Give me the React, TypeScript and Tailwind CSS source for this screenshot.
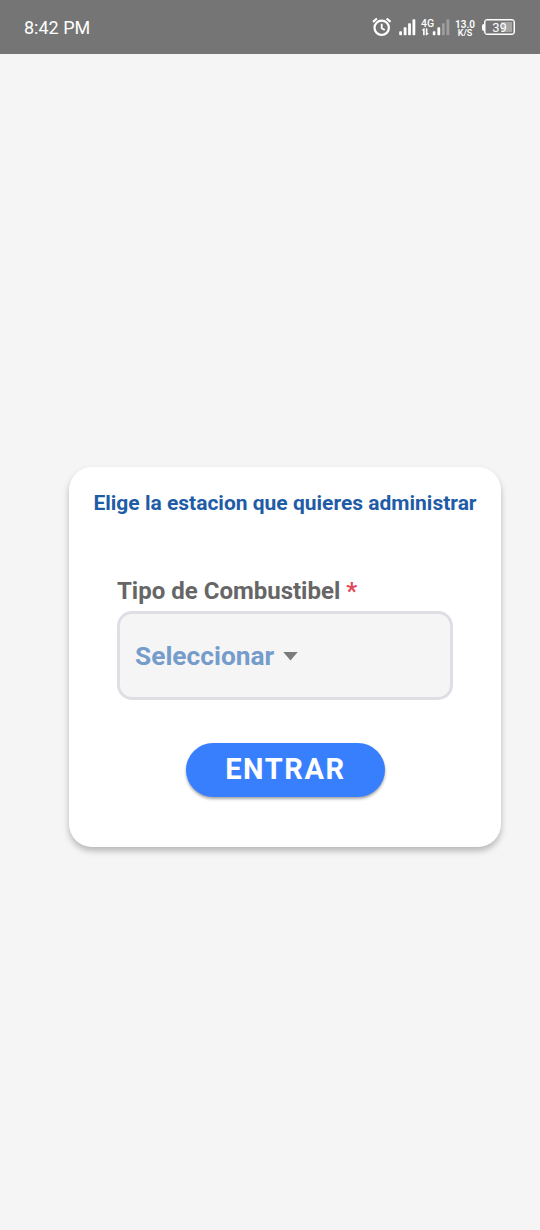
import React from "react";

function AlarmIcon() {
  return (
    <svg width="20" height="20" viewBox="0 0 20 20" fill="none" stroke="#fff">
      <circle cx="9.7" cy="10.8" r="7.2" strokeWidth="2.2" />
      <path d="M9.7 6.8v4.4l3 1.9" strokeWidth="1.8" />
      <path d="M1 4.8 4.9 1.5M18.5 4.8 14.6 1.5" strokeWidth="2.2" />
    </svg>
  );
}

function SignalIcon() {
  return (
    <svg width="17" height="19" viewBox="0 0 17 19" fill="#fff">
      <rect x="0.2" y="13.2" width="2.8" height="4" rx="0.8" />
      <rect x="4.7" y="9.2" width="2.8" height="8" rx="0.8" />
      <rect x="9.1" y="5.2" width="2.8" height="12" rx="0.8" />
      <rect x="13.5" y="1.2" width="2.8" height="16" rx="0.8" />
    </svg>
  );
}

function DataSignalIcon() {
  return (
    <svg width="29" height="19" viewBox="0 0 29 19" fill="#fff">
      <text x="0" y="9" fontFamily="Roboto, sans-serif" fontSize="10.5" fontWeight="500">
        4G
      </text>
      <path d="M.6 12.4 2.6 10.2h1.1v7H2.1v-4.8zM4.8 10.2h1.6V15h1.5l-2 2.2H4.8z" />
      <rect x="11.8" y="13.2" width="2.6" height="4" rx="0.7" />
      <rect x="16.4" y="9.2" width="2.8" height="8" rx="0.7" />
      <rect x="21" y="5.2" width="2.7" height="12" rx="0.7" opacity="0.3" />
      <rect x="25.5" y="1.2" width="2.8" height="16" rx="0.7" opacity="0.3" />
    </svg>
  );
}

function Battery() {
  return (
    <div className="flex items-center">
      <span className="h-[7px] w-[2px] rounded-l-sm bg-white" />
      <div className="relative flex h-4 w-[31px] items-center justify-center rounded-[3px] border border-white ring-[0.5px] ring-white ring-inset">
        <span className="absolute inset-y-[2px] right-[2px] w-[11px] bg-white/35" />
        <span className="relative text-[13px] leading-none text-white">39</span>
      </div>
    </div>
  );
}

function StatusBar() {
  return (
    <header className="flex h-[54px] items-center justify-between bg-[#757575] pr-[25px] pl-6 text-white">
      <span className="pt-[2px] text-[18px] leading-none">8:42 PM</span>
      <div className="flex items-center">
        <AlarmIcon />
        <span className="w-[7px]" />
        <SignalIcon />
        <span className="w-[5px]" />
        <DataSignalIcon />
        <span className="w-[5px]" />
        <div className="flex w-5 flex-col items-center pt-[3px] text-[10px] leading-[9px] font-semibold">
          <span>13.0</span>
          <span className="text-[9px]">K/S</span>
        </div>
        <span className="w-[7px]" />
        <Battery />
      </div>
    </header>
  );
}

export default function App() {
  return (
    <div className="h-[1230px] w-[540px] overflow-hidden bg-[#f5f5f5] font-[Roboto,sans-serif]">
      <StatusBar />
      <main className="mt-[413px] ml-[69px] flex h-[380px] w-[432px] flex-col rounded-[23px] bg-white px-12 shadow-[0_4px_6px_rgba(0,0,0,0.25)]">
        <h1 className="-mx-6 mt-6 text-center text-[21px] leading-6 font-bold whitespace-nowrap text-[#1f5ca6]">
          Elige la estacion que quieres administrar
        </h1>
        <label className="mt-[62px] text-[24px] leading-7 font-bold whitespace-nowrap text-[#666666]">
          Tipo de Combustibel <span className="text-[#e54558]">*</span>
        </label>
        <button className="mt-[6px] flex h-[89px] w-[336px] items-center gap-[9px] rounded-[15px] border-[3px] border-[#dddfe5] bg-[#f5f5f6] pt-[2px] pl-[15px] text-[26.3px] leading-none font-bold text-[#759ccb]">
          Seleccionar
          <svg width="15" height="9" viewBox="0 0 15 9" fill="#7a7b7b">
            <path d="M.3 0h14.4L7.5 8.5z" />
          </svg>
        </button>
        <button className="mt-[43px] ml-[69px] flex h-[54px] w-[199px] items-center justify-center rounded-full bg-[#387ffe] pb-[2px] text-[29px] leading-none font-bold tracking-[1.6px] text-white shadow-[0_2px_3px_rgba(0,0,0,0.35)]">
          ENTRAR
        </button>
      </main>
    </div>
  );
}
